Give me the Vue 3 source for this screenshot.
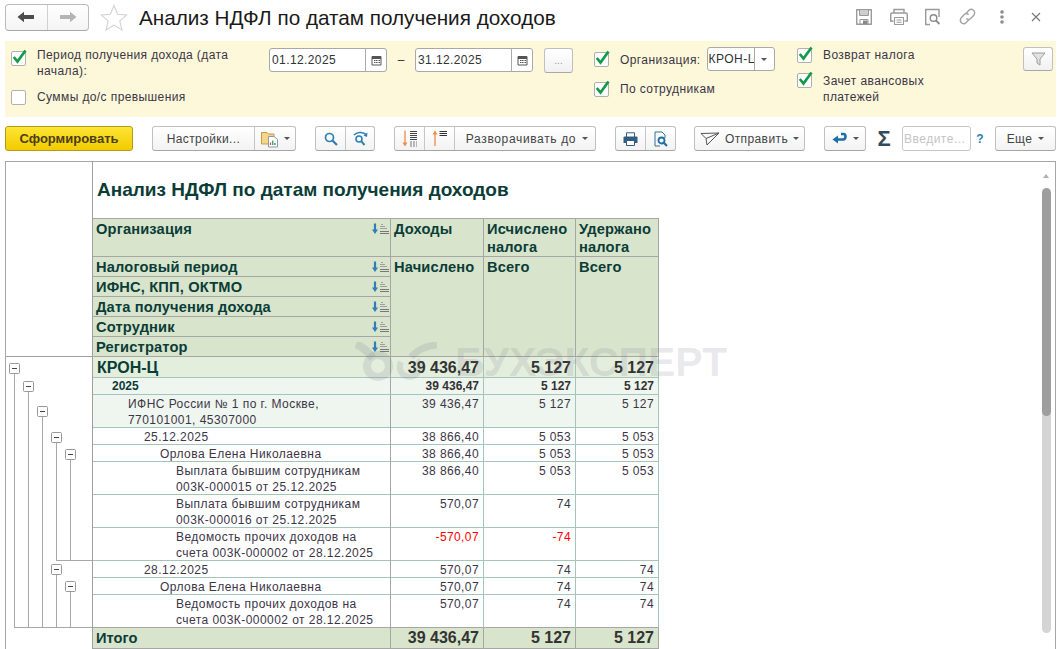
<script setup>
const rows = [
  { name: 'КРОН-Ц', level: 0, kind: 'org', h: 'h21', vals: ['39 436,47', '5 127', '5 127'] },
  { name: '2025', level: 1, kind: 'year', h: 'h17', vals: ['39 436,47', '5 127', '5 127'] },
  { name: 'ИФНС России № 1 по г. Москве,\n770101001, 45307000', level: 2, kind: 'tint', h: 'h33', vals: ['39 436,47', '5 127', '5 127'] },
  { name: '25.12.2025', level: 3, h: 'h17', vals: ['38 866,40', '5 053', '5 053'] },
  { name: 'Орлова Елена Николаевна', level: 4, h: 'h17', vals: ['38 866,40', '5 053', '5 053'] },
  { name: 'Выплата бывшим сотрудникам\n003К-000015 от 25.12.2025', level: 5, h: 'h33', vals: ['38 866,40', '5 053', '5 053'] },
  { name: 'Выплата бывшим сотрудникам\n003К-000016 от 25.12.2025', level: 5, h: 'h33', vals: ['570,07', '74', ''] },
  { name: 'Ведомость прочих доходов на\nсчета 003К-000002 от 28.12.2025', level: 5, h: 'h33', red: true, vals: ['-570,07', '-74', ''] },
  { name: '28.12.2025', level: 3, h: 'h17', vals: ['570,07', '74', '74'] },
  { name: 'Орлова Елена Николаевна', level: 4, h: 'h17', vals: ['570,07', '74', '74'] },
  { name: 'Ведомость прочих доходов на\nсчета 003К-000002 от 28.12.2025', level: 5, h: 'h33', vals: ['570,07', '74', '74'] }
]

const sortHeads = ['Налоговый период', 'ИФНС, КПП, ОКТМО', 'Дата получения дохода', 'Сотрудник', 'Регистратор']

// узлы дерева группировок: x, y внутри svg (начало в y=357)
const nodes = [
  { x: 9, y: 11 }, { x: 23, y: 29 }, { x: 37, y: 54 }, { x: 51, y: 80 }, { x: 65, y: 97 },
  { x: 51, y: 212 }, { x: 65, y: 229 }
]
</script>

<template>
  <div class="page">
    <header class="top">
      <div class="nav">
        <button class="nav-btn">
          <svg width="18" height="12" viewBox="0 0 18 12"><path d="M0.5 6 7 0.8V4H17V8H7V11.2Z" fill="#4d4d4d"/></svg>
        </button>
        <button class="nav-btn">
          <svg width="18" height="12" viewBox="0 0 18 12"><path d="M17.5 6 11 0.8V4H1V8H11V11.2Z" fill="#b4b4b4"/></svg>
        </button>
      </div>
      <svg class="star" width="28" height="27" viewBox="0 0 28 27"><path d="M14 1.5 17.6 10.2 26.8 10.9 19.8 16.9 22 26 14 21.1 6 26 8.2 16.9 1.2 10.9 10.4 10.2Z" fill="#fff" stroke="#d2d2d2" stroke-width="1.1"/></svg>
      <h1 class="title">Анализ НДФЛ по датам получения доходов</h1>
      <div class="top-icons">
        <span class="ti"><svg width="18" height="18" viewBox="0 0 18 18" fill="none" stroke="#9a9a9a" stroke-width="1.4"><path d="M1.7 1.7H16.3V16.3H1.7Z" stroke-linejoin="round"/><path d="M4.5 2V7.5H13.5V2M5 4H13M5 6H13" stroke-width="1"/><path d="M5 16V11.5H13V16" stroke-width="1"/><rect x="8" y="12.5" width="4.5" height="3.5" fill="#8a8a8a" stroke="none"/></svg></span>
        <span class="ti"><svg width="20" height="18" viewBox="0 0 20 18" fill="none" stroke="#9a9a9a" stroke-width="1.4"><path d="M5 5V1.5H15V5M4.5 13H1.7V6.5Q1.7 5 3.2 5H16.8Q18.3 5 18.3 6.5V13H15.5"/><path d="M5.5 9.5H14.5V16.5H5.5ZM7.5 12H12.5M7.5 14.3H12.5" stroke-width="1.1"/></svg></span>
        <span class="ti"><svg width="17" height="18" viewBox="0 0 17 18" fill="none" stroke="#9a9a9a" stroke-width="1.4"><path d="M6 16.5H1.7V1.5H15V9"/><circle cx="9.5" cy="10" r="3.3" stroke="#8a8a8a"/><path d="M12 12.5 15.5 16" stroke="#8a8a8a" stroke-width="1.8"/></svg></span>
        <span class="ti"><svg width="19" height="19" viewBox="0 0 19 19" fill="none" stroke="#a3a3a3" stroke-width="1.4" stroke-linecap="round"><path d="M8 6.5 11 3.2Q13 1.2 15.3 3T16 8L12.5 11.8Q10.6 13.3 8.8 11.8"/><path d="M11 12.5 8 15.8Q6 17.8 3.7 16T3 11L6.5 7.2Q8.4 5.7 10.2 7.2"/></svg></span>
        <span class="ti"><svg width="4" height="14" viewBox="0 0 4 14" fill="#8c8c8c"><circle cx="2" cy="2" r="1.8"/><circle cx="2" cy="7" r="1.8"/><circle cx="2" cy="12" r="1.8"/></svg></span>
        <span class="ti"><svg width="10" height="10" viewBox="0 0 10 10" stroke="#777" stroke-width="1.1"><path d="M1 1 9 9M9 1 1 9"/></svg></span>
      </div>
    </header>

    <section class="filters">
      <div class="col col-period">
        <label class="check-row">
          <span class="box"><svg class="tick" width="16" height="16" viewBox="0 0 16 16"><path d="M2.8 8 6.5 12.5 14.5 1.5" fill="none" stroke="#129a48" stroke-width="2.7"/></svg></span>
          <span class="lbl">Период получения дохода (дата начала):</span>
        </label>
        <label class="check-row sums">
          <span class="box"></span>
          <span class="lbl">Суммы до/с превышения</span>
        </label>
      </div>
      <div class="col col-dates">
        <div class="date">
          <span class="date-val">01.12.2025</span>
          <span class="date-ico"><svg width="11" height="11" viewBox="0 0 11 11"><path d="M1 1.5H10V10H1Z" fill="#fff" stroke="#555"/><rect x="1" y="1.5" width="9" height="2.5" fill="#555"/><path d="M3 5.5H4.5M5 5.5H6.5M7.5 5.5H9M3 7.5H4.5M5 7.5H6.5M7.5 7.5H9" stroke="#555"/></svg></span>
        </div>
        <span class="dash">–</span>
        <div class="date">
          <span class="date-val">31.12.2025</span>
          <span class="date-ico"><svg width="11" height="11" viewBox="0 0 11 11"><path d="M1 1.5H10V10H1Z" fill="#fff" stroke="#555"/><rect x="1" y="1.5" width="9" height="2.5" fill="#555"/><path d="M3 5.5H4.5M5 5.5H6.5M7.5 5.5H9M3 7.5H4.5M5 7.5H6.5M7.5 7.5H9" stroke="#555"/></svg></span>
        </div>
        <button class="btn dots">...</button>
      </div>
      <div class="col col-org">
        <div class="check-row org">
          <span class="box"><svg class="tick" width="16" height="16" viewBox="0 0 16 16"><path d="M2.8 8 6.5 12.5 14.5 1.5" fill="none" stroke="#129a48" stroke-width="2.7"/></svg></span>
          <span class="lbl org-lbl">Организация:</span>
          <div class="combo">
            <span class="combo-val">КРОН-Ц</span>
            <span class="combo-ico"><i class="caret"></i></span>
          </div>
        </div>
        <label class="check-row by-emp">
          <span class="box"><svg class="tick" width="16" height="16" viewBox="0 0 16 16"><path d="M2.8 8 6.5 12.5 14.5 1.5" fill="none" stroke="#129a48" stroke-width="2.7"/></svg></span>
          <span class="lbl">По сотрудникам</span>
        </label>
      </div>
      <div class="col col-flags">
        <label class="check-row">
          <span class="box"><svg class="tick" width="16" height="16" viewBox="0 0 16 16"><path d="M2.8 8 6.5 12.5 14.5 1.5" fill="none" stroke="#129a48" stroke-width="2.7"/></svg></span>
          <span class="lbl">Возврат налога</span>
        </label>
        <label class="check-row offset">
          <span class="box"><svg class="tick" width="16" height="16" viewBox="0 0 16 16"><path d="M2.8 8 6.5 12.5 14.5 1.5" fill="none" stroke="#129a48" stroke-width="2.7"/></svg></span>
          <span class="lbl">Зачет авансовых платежей</span>
        </label>
      </div>
      <button class="btn funnel">
        <svg width="15" height="14" viewBox="0 0 15 14"><path d="M1 1H14L9 7V13L6 11V7Z" fill="#e2e2e2" stroke="#9c9c9c"/></svg>
      </button>
    </section>

    <nav class="toolbar">
      <button class="primary">Сформировать</button>

      <div class="group g-settings">
        <button class="seg seg-text settings">Настройки...</button>
        <button class="seg variant">
          <svg width="18" height="18" viewBox="0 0 18 18"><path d="M0.5 2.5H6L7.5 4H13V14H0.5Z" fill="#f5d48c" stroke="#c79a45"/><path d="M7.5 6.5H13L16.5 9.5V17H7.5Z" fill="#fff" stroke="#8b9aa5"/><path d="M9.5 15V12.5" stroke="#d05a3a" stroke-width="1.3"/><path d="M11.7 15V10.5" stroke="#3aa35a" stroke-width="1.3"/><path d="M13.9 15V13" stroke="#3a74b5" stroke-width="1.3"/></svg>
          <i class="caret"></i>
        </button>
      </div>

      <div class="group g-search">
        <button class="seg icon-seg w30">
          <svg width="14" height="14" viewBox="0 0 14 14" fill="none" stroke="#2f7fb5"><circle cx="5.5" cy="5.5" r="4" stroke-width="1.7"/><path d="M8.5 8.5 13 13" stroke-width="2.2"/></svg>
        </button>
        <button class="seg icon-seg w29">
          <svg width="15" height="15" viewBox="0 0 15 15" fill="none" stroke="#2f7fb5"><path d="M1 4Q4 1 8 1.5T13 4" stroke-width="1.5"/><path d="M14.5 1.5 14 6 10.5 4.5Z" fill="#2f7fb5" stroke="none"/><circle cx="6" cy="8" r="3" stroke-width="1.6"/><path d="M8.2 10.2 11.5 14" stroke-width="2"/></svg>
        </button>
      </div>

      <div class="group g-expand">
        <button class="seg icon-seg w29">
          <svg width="16" height="17" viewBox="0 0 16 17" fill="none"><path d="M3 0.5V14" stroke="#ef8a4a" stroke-width="1.3"/><path d="M0.5 12.5H5.5L3 16.5Z" fill="#ef8a4a"/><path d="M8 1.5H15M8 3.5H15M8 5.5H15M8 7.5H15M8 9.5H15" stroke="#444"/><path d="M8 12H15M8 14H15M8 16H15" stroke="#777" stroke-dasharray="2 1"/></svg>
        </button>
        <button class="seg icon-seg w30">
          <svg width="16" height="17" viewBox="0 0 16 17" fill="none"><path d="M3 3V16" stroke="#ef8a4a" stroke-width="1.3"/><path d="M0.5 4.5H5.5L3 0.5Z" fill="#ef8a4a"/><path d="M7.5 1.5H15M7.5 3.5H15M7.5 5.5H15" stroke="#333"/></svg>
        </button>
        <button class="seg seg-text expand">Разворачивать до <i class="caret"></i></button>
      </div>

      <div class="group g-print">
        <button class="seg icon-seg w30">
          <svg width="15" height="14" viewBox="0 0 15 14"><path d="M3.5 5V0.8H11.5V5" fill="#fff" stroke="#315d82"/><path d="M0.5 5.5Q0.5 4.5 1.5 4.5H13.5Q14.5 4.5 14.5 5.5V11H0.5Z" fill="#315d82"/><path d="M3.5 8.5H11.5V13.5H3.5Z" fill="#fff" stroke="#315d82"/></svg>
        </button>
        <button class="seg icon-seg w30">
          <svg width="14" height="16" viewBox="0 0 14 16" fill="none"><path d="M1 15V1H8L11 4V7M1 15H6" stroke="#3a6e90"/><circle cx="7.5" cy="9.5" r="3" stroke="#1f6ea8" stroke-width="1.8"/><path d="M9.8 11.8 13 15" stroke="#1f6ea8" stroke-width="2.2"/></svg>
        </button>
      </div>

      <div class="group g-send">
        <button class="seg seg-text send">
          <svg width="20" height="14" viewBox="0 0 20 14" fill="none" stroke="#555"><path d="M1 1.5 19 1 7 13 6 6.5Z" stroke-linejoin="round"/><path d="M6 6.5 19 1"/></svg>
          <span>Отправить</span>
          <i class="caret"></i>
        </button>
      </div>

      <div class="group g-return">
        <button class="seg seg-text ret">
          <svg width="15" height="13" viewBox="0 0 15 13" fill="none"><path d="M9 2H11.5Q13.5 2 13.5 4.5T11.5 7.5H5" stroke="#1f6ea8" stroke-width="2.6"/><path d="M6 3.5V11.5L0.5 7.5Z" fill="#1f6ea8"/></svg>
          <i class="caret"></i>
        </button>
      </div>

      <span class="sigma">Σ</span>
      <div class="search-box">Введите...</div>
      <span class="help">?</span>

      <div class="group g-more">
        <button class="seg seg-text more">Еще <i class="caret"></i></button>
      </div>
    </nav>

    <main class="report">
      <aside class="gutter">
        <div class="gutter-head"></div>
        <svg class="tree" width="87" height="292" viewBox="0 0 87 292" fill="none">
          <g stroke="#a8a8a8">
            <path d="M9.5 11V270.5M23.5 29V270.5M37.5 54V270.5M51.5 80V203.5M65.5 97V203.5M51.5 212V270.5M65.5 229V270.5"/>
            <path d="M51 203.5H87M9 270.5H87"/>
          </g>
          <g v-for="n in nodes" :key="n.x + '-' + n.y">
            <rect :x="n.x - 4.5" :y="n.y - 4.5" width="10" height="10" rx="1" fill="#fdfdfd" stroke="#999"/>
            <path :d="`M${n.x - 2} ${n.y + 0.5}H${n.x + 3}`" stroke="#444"/>
          </g>
        </svg>
      </aside>

      <div class="sheet">
        <div class="sheet-title">Анализ НДФЛ по датам получения доходов</div>

        <div class="head">
          <div class="hc hc-org">
            <span>Организация</span>
            <svg class="sort" width="18" height="12" viewBox="0 0 18 12" fill="none"><path d="M3 0.5V7.5" stroke="#2f7fb5" stroke-width="2.2"/><path d="M0 6.5H6L3 11Z" fill="#2f7fb5"/><path d="M9 1.5H11M8 3.5H13M8 5.5H15" stroke="#a0a0a0"/><path d="M8 8.5H17M8 10.5H17" stroke="#777"/></svg>
          </div>
          <div class="hc hc-col c2 r1">Доходы</div>
          <div class="hc hc-col c3 r1">Исчислено налога</div>
          <div class="hc hc-col c4 r1">Удержано налога</div>
          <div class="hc hc-col c2 r2">Начислено</div>
          <div class="hc hc-col c3 r2">Всего</div>
          <div class="hc hc-col c4 r2">Всего</div>
          <div v-for="t in sortHeads" :key="t" class="hc hc-sort">
            <span>{{ t }}</span>
            <svg class="sort" width="18" height="12" viewBox="0 0 18 12" fill="none"><path d="M3 0.5V7.5" stroke="#2f7fb5" stroke-width="2.2"/><path d="M0 6.5H6L3 11Z" fill="#2f7fb5"/><path d="M9 1.5H11M8 3.5H13M8 5.5H15" stroke="#a0a0a0"/><path d="M8 8.5H17M8 10.5H17" stroke="#777"/></svg>
          </div>
        </div>

        <div v-for="(r, i) in rows" :key="i" class="row" :class="[r.kind, r.h, { last: i === rows.length - 1 }]">
          <div class="cell name" :style="{ paddingLeft: (r.level * 16 + 3) + 'px' }">{{ r.name }}</div>
          <div v-for="(v, j) in r.vals" :key="j" class="cell num" :class="{ neg: r.red }">{{ v }}</div>
        </div>

        <div class="row total">
          <div class="cell name">Итого</div>
          <div class="cell num">39 436,47</div>
          <div class="cell num">5 127</div>
          <div class="cell num">5 127</div>
        </div>
      </div>

      <div class="stamp">
        <svg width="82" height="40" viewBox="0 0 82 40" fill="none" stroke="currentColor">
          <path d="M1 2Q10 6 18 16" stroke-width="8"/>
          <circle cx="23" cy="24" r="11" stroke-width="8"/>
          <path d="M46 20A10 10 0 1 0 62 18" stroke-width="6"/>
          <path d="M56 15Q66 4 82 3" stroke-width="7"/>
        </svg>
        <span>БУХЭКСПЕРТ</span>
      </div>

      <div class="scroll">
        <i class="scroll-up"></i>
        <div class="track"><div class="thumb"></div></div>
      </div>
    </main>
  </div>
</template>

<style>
html, body { margin: 0; overflow: hidden; background: #fff; }
</style>

<style scoped>
.page { width: 1059px; height: 649px; overflow: hidden; background: #fff; font-family: "Liberation Sans", Arial, sans-serif; font-size: 12px; color: #333; }
button { font: inherit; color: inherit; padding: 0; margin: 0; cursor: default; }

.top { display: flex; align-items: center; height: 36px; padding: 0 5px; box-sizing: border-box; }
.nav { display: flex; width: 84px; height: 27px; margin-top: -2px; border: 1px solid #bcbcbc; border-bottom-color: #a8a8a8; border-radius: 4px; background: linear-gradient(#fff, #f4f4f4); box-sizing: border-box; }
.nav-btn { flex: 1; border: 0; background: none; display: flex; align-items: center; justify-content: center; }
.nav-btn + .nav-btn { border-left: 1px solid #d0d0d0; }
.star { margin-left: 11px; margin-top: -1px; }
.title { margin: 0 0 0 11px; font-weight: 400; font-size: 20.7px; color: #1a1a1a; white-space: nowrap; }
.top-icons { display: flex; margin-left: auto; margin-right: 1px; margin-top: -3px; }
.ti { width: 34.3px; display: flex; justify-content: center; align-items: center; }

.filters { display: flex; height: 76px; margin: 5px 3px 0 5px; background: #fdf8d9; position: relative; }
.col { box-sizing: border-box; }
.col-period { width: 264px; padding: 6px 0 0 6px; }
.col-dates { width: 325px; display: flex; align-items: flex-start; padding-top: 7px; }
.col-org { width: 203px; padding-top: 6px; }
.col-flags { width: 220px; padding-top: 6px; }
.check-row { display: flex; align-items: flex-start; }
.box { position: relative; flex: none; width: 15px; height: 15px; margin-top: 4px; background: #fff; border: 1px solid #b0b0b0; border-radius: 2px; box-sizing: border-box; }
.tick { position: absolute; left: -1px; top: -3px; }
.lbl { margin-left: 11px; line-height: 16px; width: 215px; font-size: 12px; letter-spacing: 0.4px; color: #3b3547; }
.sums { margin-top: 6px; }
.sums .box { margin-top: 5px; }
.sums .lbl { margin-top: 4px; }
.org .lbl { width: auto; margin-top: 5px; margin-right: 6px; white-space: nowrap; }
.org .box { margin-top: 5px; }
.by-emp { margin-top: 7px; }
.by-emp .lbl { margin-top: 3px; }
.col-flags .box { margin-top: 1px; }
.col-flags .lbl { width: 130px; }
.offset { margin-top: 9px; }
.offset .lbl { margin-top: 1px; }

.date { display: flex; width: 118px; height: 24px; border: 1px solid #a9a9a9; border-radius: 3px; background: #fff; box-sizing: border-box; }
.date-val { flex: 1; line-height: 22px; padding-left: 2px; font-size: 12px; letter-spacing: 0.4px; color: #333; }
.date-ico { width: 20px; border-left: 1px solid #a9a9a9; display: flex; align-items: center; justify-content: center; }
.dash { width: 28px; text-align: center; line-height: 24px; }
.btn { border: 1px solid #c0c0c0; border-bottom-color: #a8a8a8; border-radius: 3px; background: linear-gradient(#fff, #f1f1f1); box-sizing: border-box; }
.dots { width: 29px; height: 25px; margin-left: 11px; color: #999; font-size: 10px; }
.combo { display: flex; width: 68px; height: 24px; margin-top: 0; border: 1px solid #a9a9a9; border-radius: 3px; background: #fff; box-sizing: border-box; overflow: hidden; }
.combo-val { width: 46px; overflow: hidden; line-height: 22px; padding-left: 1px; letter-spacing: 0.5px; white-space: nowrap; box-sizing: border-box; }
.combo-ico { flex: 1; border-left: 1px solid #a9a9a9; display: flex; align-items: center; justify-content: center; }
.funnel { position: absolute; right: 3px; top: 6px; width: 30px; height: 24px; display: flex; align-items: center; justify-content: center; }

.toolbar { display: flex; align-items: center; height: 25px; margin: 9px 3px 0 5px; }
.primary { width: 128px; height: 25px; flex: none; border: 1px solid #b59a18; border-radius: 3px; background: linear-gradient(#fde534, #f3cb00); font-weight: 700; font-size: 13px; color: #4a3d17; box-sizing: border-box; }
.group { display: flex; height: 25px; flex: none; border: 1px solid #c0c0c0; border-bottom-color: #a6a6a6; border-radius: 3px; background: linear-gradient(#fff, #f3f3f3); box-sizing: border-box; }
.seg { border: 0; background: none; height: 23px; display: flex; align-items: center; justify-content: center; }
.seg + .seg { border-left: 1px solid #c6c6c6; }
.seg-text { letter-spacing: 0.4px; color: #444; white-space: nowrap; }
.caret { display: inline-block; width: 0; height: 0; border: 3px solid transparent; border-top: 3px solid #555; border-bottom: 0; }
.g-settings { width: 144px; margin-left: 19px; }
.settings { width: 101px; }
.variant { flex: 1; gap: 5px; }
.g-search { width: 60px; margin-left: 19px; }
.w30 { width: 30px; }
.w29 { width: 29px; }
.g-expand { width: 202px; margin-left: 19px; }
.expand { flex: 1; gap: 6px; padding-left: 4px; letter-spacing: 0.65px; }
.g-print { width: 61px; margin-left: 19px; }
.g-send { width: 111px; margin-left: 18px; }
.send { width: 100%; gap: 5px; }
.g-return { width: 42px; margin-left: 19px; }
.ret { width: 100%; gap: 6px; }
.sigma { width: 14px; margin-left: 11px; text-align: center; font-size: 22px; font-weight: 700; color: #34495a; line-height: 25px; }
.search-box { width: 69px; height: 25px; margin-left: 11px; padding: 1px 0 0 1px; border: 1px solid #c6c6c6; border-radius: 3px; box-sizing: border-box; line-height: 23px; color: #c4c4c4; letter-spacing: 0.5px; background: #fff; white-space: nowrap; }
.help { width: 18px; text-align: center; color: #2980b9; font-weight: 700; }
.g-more { width: 61px; margin-left: auto; }
.more { width: 100%; gap: 6px; }

.report { position: relative; display: flex; height: 488px; margin: 10px 3px 0 5px; border: 1px solid #a6a6a6; border-bottom: 0; box-sizing: border-box; overflow: hidden; }
.gutter { width: 86px; flex: none; }
.gutter-head { height: 195px; border-bottom: 1px solid #a0a0a0; box-sizing: border-box; }
.tree { display: block; margin-left: -1px; }
.sheet { flex: none; width: 567px; border-left: 1px solid #a0a0a0; box-sizing: border-box; }
.sheet-title { height: 56px; padding: 18px 0 0 4px; box-sizing: border-box; font-size: 19px; line-height: 20px; font-weight: 700; color: #0b3d38; white-space: nowrap; }

.head { display: grid; grid-template-columns: 298px 93px 92px 83px; grid-template-rows: 38px 20px 20px 20px 20px 20px; background: #d8e4cc; border-top: 1px solid #a6a6a6; box-sizing: border-box; height: 139px; }
.hc { box-sizing: border-box; border-bottom: 1px solid #a6a6a6; border-right: 1px solid #a6a6a6; font-size: 14.67px; font-weight: 700; line-height: 18px; color: #0b3d38; position: relative; padding: 1px 2px 0 3px; letter-spacing: 0.15px; }
.hc-org { grid-column: 1; grid-row: 1; }
.hc-sort { grid-column: 1; padding-top: 1px; white-space: nowrap; }
.hc-col.r1 { grid-row: 1; }
.hc-col.r2 { grid-row: 2 / 7; }
.c2 { grid-column: 2; }
.c3 { grid-column: 3; }
.c4 { grid-column: 4; }
.sort { position: absolute; right: 0; top: 4px; }

.row { display: grid; grid-template-columns: 298px 93px 92px 83px; box-sizing: border-box; border-bottom: 1px solid #a5c4ba; }
.h17 { height: 17px; }
.h21 { height: 21px; }
.h33 { height: 33px; }
.cell { box-sizing: border-box; padding-top: 1px; border-right: 1px solid #a5c4ba; line-height: 16px; white-space: pre-line; font-size: 12px; letter-spacing: 0.45px; color: #3b3547; }
.cell:first-child { border-right-color: #a6a6a6; }
.num { text-align: right; padding-right: 4px; letter-spacing: 0.4px; }
.neg { color: #f00; }
.row.org { background: #e4eedd; }
.row.org .cell { padding-top: 0; font-size: 16px; font-weight: 700; line-height: 21px; letter-spacing: 0; color: #333; }
.row.org .name { color: #0b3d38; padding-left: 4px !important; }
.row.year, .row.tint { background: #eff5ef; }
.row.year .cell { padding-top: 0; font-weight: 700; letter-spacing: 0; color: #333; }
.row.year .name { color: #0b3d38; }
.row.last { border-bottom-color: #a6a6a6; }
.row.total { height: 21px; background: #d8e4cc; border-bottom: 1px solid #a6a6a6; }
.row.total .cell { padding-top: 0; font-size: 16px; font-weight: 700; line-height: 20px; letter-spacing: 0; border-right-color: #a6a6a6; color: #333; }
.row.total .name { font-size: 14.67px; color: #0b3d38; padding-left: 3px; }

.stamp { position: absolute; left: 349px; top: 180px; display: flex; align-items: center; gap: 18px; color: rgba(120, 120, 145, 0.17); font-size: 41px; font-weight: 700; line-height: 40px; white-space: nowrap; pointer-events: none; }

.scroll { position: absolute; right: 4px; top: 0; width: 9px; height: 100%; }
.scroll-up { position: absolute; left: 1px; top: 12px; width: 0; height: 0; border: 3.5px solid transparent; border-bottom: 4px solid #b0b0b0; border-top: 0; }
.track { position: absolute; left: 0; top: 26px; width: 9px; height: 445px; border-radius: 5px; background: #d4d4d4; overflow: hidden; }
.thumb { height: 228px; background: #9e9e9e; border-radius: 5px; }
</style>
